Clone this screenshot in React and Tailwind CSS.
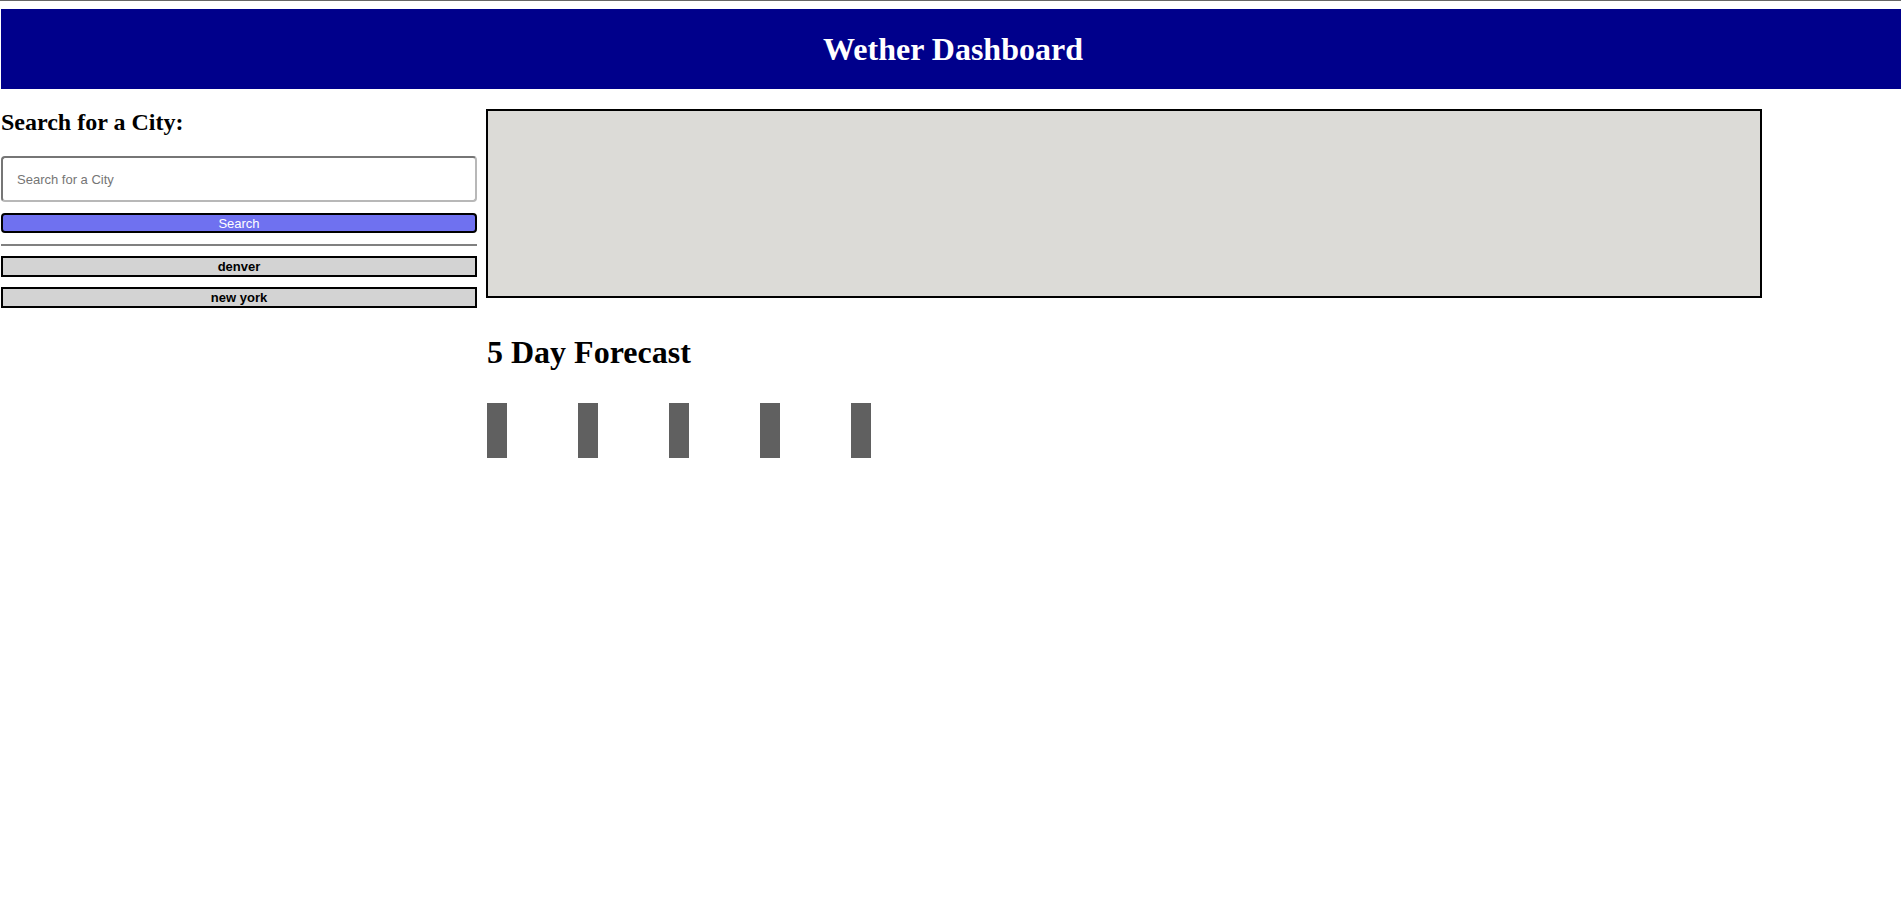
export default function App() {
  const cities = ['denver', 'new york']
  const days = [0, 1, 2, 3, 4]

  return (
    <div className="min-h-screen bg-white text-black">
      <div className="h-px bg-[#666666]" />

      {/* header */}
      <header className="mt-2 ml-px h-20 pl-1 bg-[#00008b] flex items-center justify-center">
        <h1 className="text-[32px] font-bold text-white font-['Liberation_Serif',serif]">
          Wether Dashboard
        </h1>
      </header>

      <div className="flex">
        {/* sidebar */}
        <aside className="w-[476px] ml-px shrink-0 flex flex-col">
          <h2 className="mt-5 text-[24px] leading-[27px] font-bold font-['Liberation_Serif',serif]">
            Search for a City:
          </h2>
          <input
            type="text"
            placeholder="Search for a City"
            className="mt-5 h-[46px] w-full rounded border-2 border-[#767676] border-r-[#b8b8b8] border-b-[#b8b8b8] px-[14px] text-[13px] font-['Liberation_Sans',sans-serif] placeholder:text-[#757575] outline-none"
          />
          <button className="mt-[11px] h-5 w-full rounded border-2 border-black bg-[#6f71f0] text-white text-[13px] leading-none font-['Liberation_Sans',sans-serif]">
            Search
          </button>
          <hr className="mt-[11px] border-0 h-0.5 bg-[#808080]" />
          <div className="mt-[10px] flex flex-col gap-[10px]">
            {cities.map(c => (
              <button
                key={c}
                className="h-[21px] w-full border-2 border-black bg-[#d3d3d3] text-[13px] leading-none font-bold font-['Liberation_Sans',sans-serif]"
              >
                {c}
              </button>
            ))}
          </div>
        </aside>

        {/* main */}
        <main className="ml-[9px] w-[1276px] flex flex-col">
          <div className="mt-5 h-[189px] border-2 border-black bg-[#dcdbd7]" />
          <h2 className="mt-[37px] ml-px text-[32px] leading-[35px] font-bold font-['Liberation_Serif',serif]">
            5 Day Forecast
          </h2>
          <div className="mt-[33px] ml-px flex gap-[71px]">
            {days.map(d => (
              <div key={d} className="w-5 h-[55px] bg-[#606060]" />
            ))}
          </div>
        </main>
      </div>
    </div>
  )
}
